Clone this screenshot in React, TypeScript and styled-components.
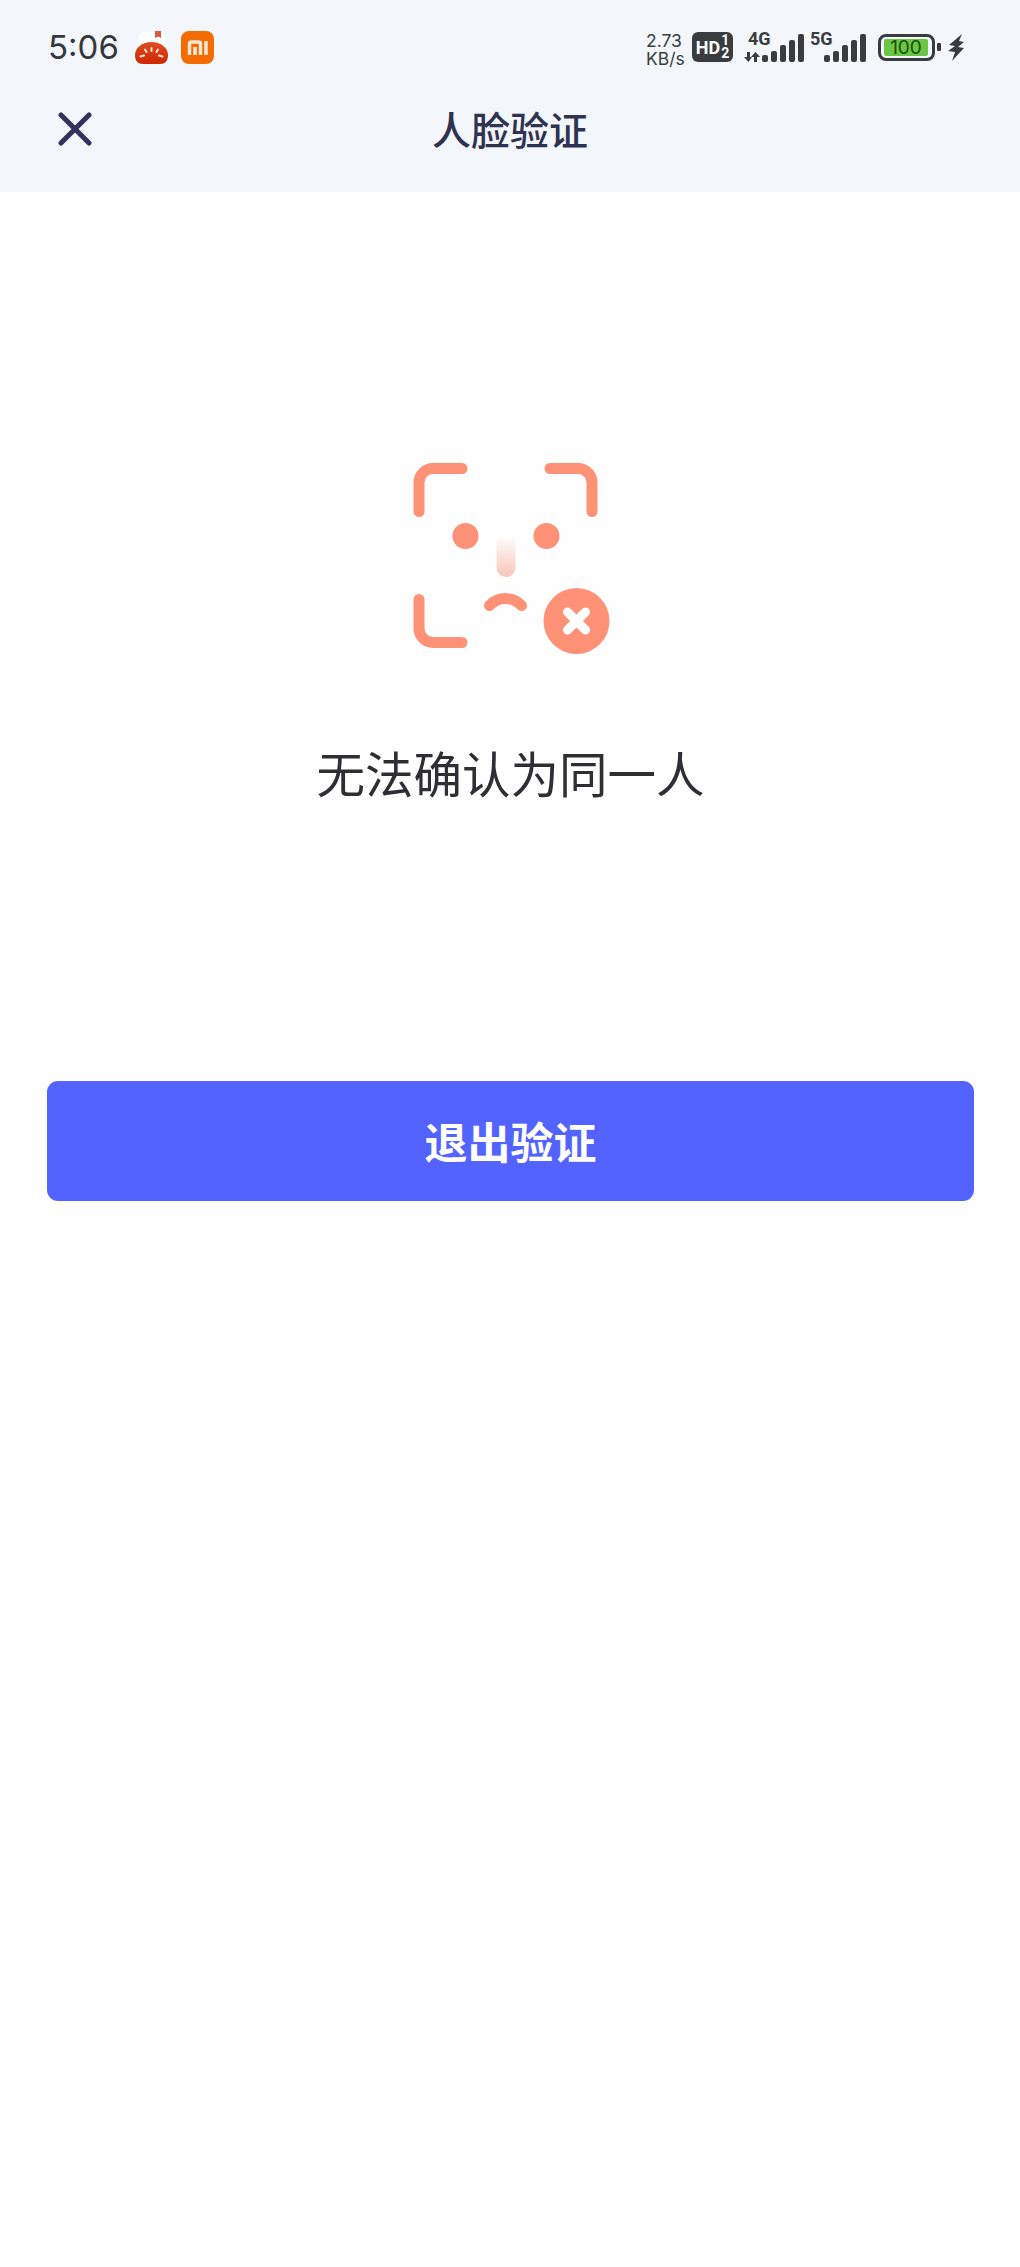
import React from 'react';
import styled, { createGlobalStyle } from 'styled-components';

const GlobalStyle = createGlobalStyle`
  html, body {
    margin: 0;
    padding: 0;
    background: #fefefe;
  }
`;

const Page = styled.div`
  display: flex;
  flex-direction: column;
  min-height: 100vh;
  font-family: Inter, "Noto Sans CJK SC", sans-serif;
`;

const Header = styled.header`
  background: #f3f6fa;
  height: 192px;
`;

const StatusBar = styled.div`
  display: flex;
  align-items: center;
  justify-content: space-between;
  height: 94px;
  padding: 0 56px 0 48px;
`;

const StatusGroup = styled.div`
  display: flex;
  align-items: center;
`;

const Time = styled.span`
  width: 87px;
  font-size: 33px;
  font-weight: 400;
  color: #33383d;
`;

const AppIcon = styled.svg`
  display: block;
  width: 33px;
  height: 33px;
  margin-right: 13px;
`;

const Speed = styled.div`
  display: flex;
  flex-direction: column;
  width: 46px;
  padding-top: 5px;
  font-size: 17.5px;
  line-height: 18px;
  color: #3a3d40;
`;

const HdBadge = styled.div`
  display: flex;
  align-items: center;
  justify-content: center;
  gap: 1px;
  width: 41px;
  height: 30px;
  margin-right: 11px;
  border-radius: 6px;
  background: #3a3d40;
  color: #fff;
  font-family: Roboto, sans-serif;
  font-size: 18px;
  font-weight: 700;
`;

const Fraction = styled.span`
  display: flex;
  flex-direction: column;
  align-items: center;
  font-size: 14px;
  line-height: 13px;
`;

const Signal = styled.div`
  position: relative;
  width: 60px;
  height: 30px;
  margin-right: 2px;
`;

const SignalLabel = styled.span`
  position: absolute;
  top: -1px;
  left: 4px;
  font-family: Roboto, sans-serif;
  font-size: 18px;
  line-height: 16px;
  font-weight: 700;
  color: #3a3d40;
`;

const SignalBars = styled.svg`
  display: block;
  width: 60px;
  height: 30px;
`;

const Battery = styled.div`
  display: flex;
  box-sizing: border-box;
  width: 57px;
  height: 27px;
  margin-left: 10px;
  border: 3px solid #3a3d40;
  border-radius: 8px;
  padding: 2px 4px 2px 3px;
`;

const BatteryFill = styled.div`
  display: flex;
  align-items: center;
  justify-content: center;
  width: 100%;
  border-radius: 2px;
  background: #6cc644;
  color: #17510f;
  font-size: 19px;
  line-height: 17px;
`;

const BatteryNub = styled.div`
  width: 4px;
  height: 8px;
  margin: 0 7px 0 2px;
  border-radius: 1px;
  background: #3a3d40;
`;

const Bolt = styled.svg`
  display: block;
  width: 16px;
  height: 27px;
`;

const NavBar = styled.div`
  display: grid;
  grid-template-columns: 1fr auto 1fr;
  align-items: center;
  height: 70px;
  padding: 0 58px;
`;

const CloseIcon = styled.svg`
  display: block;
  width: 34px;
  height: 34px;
`;

const Title = styled.h1`
  margin: 0;
  padding-top: 4px;
  font-size: 39px;
  line-height: 66px;
  font-weight: 500;
  color: #2d3350;
`;

const Main = styled.main`
  display: flex;
  flex-direction: column;
  align-items: center;
  padding: 268px 46px 0 47px;
`;

const FaceIcon = styled.svg`
  display: block;
  width: 200px;
  height: 200px;
`;

const Message = styled.p`
  margin: 81px 0 0;
  font-size: 48.5px;
  line-height: 70px;
  font-weight: 400;
  color: #2e2e33;
`;

const ExitButton = styled.button`
  align-self: stretch;
  height: 120px;
  margin-top: 270px;
  padding: 0 0 2px;
  border: none;
  border-radius: 11px;
  background: #5363ff;
  color: #fff;
  font-family: inherit;
  font-size: 43px;
  font-weight: 700;
`;

const BARS = [
  { x: 18, h: 7 },
  { x: 27, h: 11 },
  { x: 36, h: 17 },
  { x: 45, h: 22 },
  { x: 54, h: 28 },
];

const SignalGraph: React.FC<{ arrows?: boolean }> = ({ arrows }) => (
  <SignalBars viewBox="0 0 60 30">
    <g fill="#3a3d40">
      {BARS.map((b) => (
        <rect key={b.x} x={b.x} y={30 - b.h} width="6" height={b.h} rx="2" />
      ))}
      {arrows && (
        <path d="M3 20h3v5h2l-3.5 5L0 25h3zM10 30h3v-5h3l-4.500-5L7 25h3z" />
      )}
    </g>
  </SignalBars>
);

const App: React.FC = () => (
  <Page>
    <GlobalStyle />
    <Header>
      <StatusBar>
        <StatusGroup>
          <Time>5:06</Time>
          <AppIcon viewBox="0 0 33 33">
            <defs>
              <linearGradient id="tomato" x1="0" y1="0" x2="0" y2="1">
                <stop offset="0" stopColor="#dd4f22" />
                <stop offset="1" stopColor="#cf2505" />
              </linearGradient>
            </defs>
            <rect x="3" y="1" width="27" height="16" rx="6" fill="#fff" />
            <path d="M20 0h6v7l-3-1.5L20 7z" fill="#d9583f" />
            <path d="M0 24C0 17 7 11 16.5 11S33 17 33 24c0 6-3 9-8 9H8c-5 0-8-3-8-9z" fill="url(#tomato)" />
            <g stroke="#ffe4d0" strokeWidth="2" strokeLinecap="round">
              <path d="M16.5 17v3M10 18.500l1.500 2.500M23 18.500 21.500 21M5.500 25.500l3.500-1M27.500 25.500 24 24.500" />
            </g>
          </AppIcon>
          <AppIcon viewBox="0 0 33 33">
            <rect width="33" height="33" rx="8" fill="#f46b00" />
            <g fill="none" stroke="#f8e8d8" strokeWidth="3.5">
              <path d="M8.500 24V13a2 2 0 0 1 2-2h7a2 2 0 0 1 2 2v11M14 16v8" />
              <path d="M25 10v14" />
            </g>
          </AppIcon>
        </StatusGroup>
        <StatusGroup>
          <Speed>
            <span>2.73</span>
            <span>KB/s</span>
          </Speed>
          <HdBadge>
            HD
            <Fraction>
              <span>1</span>
              <span>2</span>
            </Fraction>
          </HdBadge>
          <Signal>
            <SignalLabel>4G</SignalLabel>
            <SignalGraph arrows />
          </Signal>
          <Signal>
            <SignalLabel>5G</SignalLabel>
            <SignalGraph />
          </Signal>
          <Battery>
            <BatteryFill>100</BatteryFill>
          </Battery>
          <BatteryNub />
          <Bolt viewBox="0 0 16 27">
            <path d="M14 0 1 11l6 1-7 5 7 1-3 9 12-13-6-1 6-5-5-1z" fill="#3a3d40" />
          </Bolt>
        </StatusGroup>
      </StatusBar>
      <NavBar>
        <CloseIcon viewBox="0 0 34 34">
          <path d="M3 3l28 28M31 3 3 31" stroke="#32325d" strokeWidth="5" strokeLinecap="round" />
        </CloseIcon>
        <Title>人脸验证</Title>
      </NavBar>
    </Header>
    <Main>
      <FaceIcon viewBox="410.5 460 200 200">
        <defs>
          <linearGradient id="nose" x1="0" y1="0" x2="0" y2="1">
            <stop offset="0" stopColor="#fff" />
            <stop offset="1" stopColor="#f6c6b8" />
          </linearGradient>
        </defs>
        <g fill="none" stroke="#ff9176" strokeWidth="11" strokeLinecap="round">
          <path d="M418.5 511.5v-29a14 14 0 0 1 14-14h29" />
          <path d="M549.5 468.5h28a14 14 0 0 1 14 14v29" />
          <path d="M418.5 599.5v29a14 14 0 0 0 14 14h29" />
          <path d="M489 605.5a22 22 0 0 1 32 0" />
        </g>
        <circle cx="465" cy="536" r="13" fill="#ff9176" />
        <circle cx="546" cy="536" r="13" fill="#ff9176" />
        <rect x="496" y="535" width="19" height="42" rx="9.5" fill="url(#nose)" />
        <circle cx="576" cy="621" r="33" fill="#ff9176" />
        <path d="M567 612l18 18M585 612l-18 18" stroke="#fff" strokeWidth="9" strokeLinecap="round" />
      </FaceIcon>
      <Message>无法确认为同一人</Message>
      <ExitButton>退出验证</ExitButton>
    </Main>
  </Page>
);

export default App;
